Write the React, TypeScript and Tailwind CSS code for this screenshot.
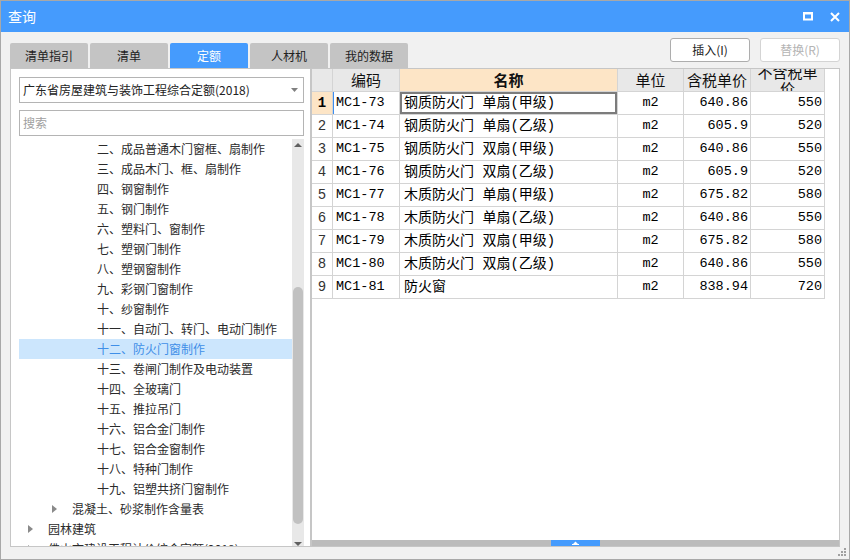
import React from 'react';

type TreeItem = { level: 1 | 2 | 3; text: string; arrow?: boolean; selected?: boolean };

const TREE: TreeItem[] = [
  { level: 3, text: '二、成品普通木门窗框、扇制作' },
  { level: 3, text: '三、成品木门、框、扇制作' },
  { level: 3, text: '四、钢窗制作' },
  { level: 3, text: '五、钢门制作' },
  { level: 3, text: '六、塑料门、窗制作' },
  { level: 3, text: '七、塑钢门制作' },
  { level: 3, text: '八、塑钢窗制作' },
  { level: 3, text: '九、彩钢门窗制作' },
  { level: 3, text: '十、纱窗制作' },
  { level: 3, text: '十一、自动门、转门、电动门制作' },
  { level: 3, text: '十二、防火门窗制作', selected: true },
  { level: 3, text: '十三、卷闸门制作及电动装置' },
  { level: 3, text: '十四、全玻璃门' },
  { level: 3, text: '十五、推拉吊门' },
  { level: 3, text: '十六、铝合金门制作' },
  { level: 3, text: '十七、铝合金窗制作' },
  { level: 3, text: '十八、特种门制作' },
  { level: 3, text: '十九、铝塑共挤门窗制作' },
  { level: 2, text: '混凝土、砂浆制作含量表', arrow: true },
  { level: 1, text: '园林建筑', arrow: true },
  { level: 1, text: '佛山市建设工程计价综合定额(2018)', arrow: true },
];

const ROWS = [
  ['MC1-73', '钢质防火门 单扇(甲级)', 'm2', '640.86', '550'],
  ['MC1-74', '钢质防火门 单扇(乙级)', 'm2', '605.9', '520'],
  ['MC1-75', '钢质防火门 双扇(甲级)', 'm2', '640.86', '550'],
  ['MC1-76', '钢质防火门 双扇(乙级)', 'm2', '605.9', '520'],
  ['MC1-77', '木质防火门 单扇(甲级)', 'm2', '675.82', '580'],
  ['MC1-78', '木质防火门 单扇(乙级)', 'm2', '640.86', '550'],
  ['MC1-79', '木质防火门 双扇(甲级)', 'm2', '675.82', '580'],
  ['MC1-80', '木质防火门 双扇(乙级)', 'm2', '640.86', '550'],
  ['MC1-81', '防火窗', 'm2', '838.94', '720'],
];

const TABS = ['清单指引', '清单', '定额', '人材机', '我的数据'];

const indent = { 1: 'pl-[9px]', 2: 'pl-[33px]', 3: 'pl-[58px]' };

const ui = "font-['Noto_Sans_CJK_SC','Noto_Sans',sans-serif]";
const mono = "font-['Liberation_Mono','Noto_Sans_CJK_SC',monospace]";

function Arrow() {
  return (
    <svg width="5" height="8" viewBox="0 0 5 8">
      <path d="M0 0 L5 4 L0 8 Z" fill="#8a8a8a" />
    </svg>
  );
}

function TreeList() {
  return (
    <div className="flex-1 min-h-0 flex overflow-hidden">
      <div className="flex-1 overflow-hidden">
        {TREE.map((item, i) => (
          <div
            key={i}
            className={`h-[20px] flex items-center whitespace-nowrap text-[12px] ${indent[item.level]} ${
              item.selected ? 'bg-[#cce6fd] text-[#3f8fe8]' : 'text-[#2a2a2a]'
            }`}
          >
            <span className="w-[20px] flex items-center">{item.arrow && <Arrow />}</span>
            <span className="leading-[20px]">{item.text}</span>
          </div>
        ))}
      </div>
      {/* vertical scrollbar */}
      <div className="w-[12px] bg-[#e8e8e8] flex flex-col items-center">
        <svg width="8" height="4" viewBox="0 0 8 4" className="mt-[4px]">
          <path d="M0 4 L4 0 L8 4 Z" fill="#606060" />
        </svg>
        <div className="mt-[140px] w-[10px] h-[237px] rounded-full bg-[#c1c1c1]" />
        <svg width="8" height="4" viewBox="0 0 8 4" className="mt-[18px]">
          <path d="M0 0 L8 0 L4 4 Z" fill="#606060" />
        </svg>
      </div>
    </div>
  );
}

function LeftPanel() {
  return (
    <div className="w-[301px] border border-[#c6c6c6] bg-white pl-[8px] pr-[6px] pt-[8px] flex flex-col">
      <div className="h-[26px] border border-[#b4b4b4] flex items-center pl-[3px] pr-[5px]">
        <span className="flex-1 text-[12px] text-[#222] whitespace-nowrap">广东省房屋建筑与装饰工程综合定额(2018)</span>
        <svg width="7" height="4" viewBox="0 0 7 4">
          <path d="M0 0 L7 0 L3.5 4 Z" fill="#808080" />
        </svg>
      </div>
      <div className="mt-[7px] h-[26px] border border-[#b4b4b4] flex items-center pl-[3px]">
        <span className="text-[12px] text-[#a0a0a0]">搜索</span>
      </div>
      <div className="mt-[3px] flex-1 min-h-0 flex flex-col">
        <TreeList />
      </div>
    </div>
  );
}

const COLS = ['w-[21px]', 'w-[67px]', 'w-[218px]', 'w-[66px]', 'w-[67px]', 'w-[74px]'];
const cell = 'h-[23px] shrink-0 border-r border-b border-[#d4d4d4] overflow-hidden whitespace-nowrap flex items-center';

function Grid() {
  return (
    <div className="flex flex-col w-[513px]">
      <div className="flex bg-[#e8e8e8] text-[15px] text-[#111]">
        <div className={`${cell} ${COLS[0]}`} />
        <div className={`${cell} ${COLS[1]} justify-center`}>编码</div>
        <div className={`${cell} ${COLS[2]} justify-center bg-[#fde5c6] font-bold`}>名称</div>
        <div className={`${cell} ${COLS[3]} justify-center`}>单位</div>
        <div className={`${cell} ${COLS[4]} justify-center`}>含税单价</div>
        <div className={`${cell} ${COLS[5]} justify-center`}>
          <span className="block w-[66px] whitespace-normal text-center leading-[16px]">不含税单价</span>
        </div>
      </div>
      {ROWS.map((r, i) => (
        <div key={i} className={`flex text-[14px] text-black ${mono}`}>
          <div
            className={`${cell} ${COLS[0]} justify-center ${
              i === 0 ? 'bg-[#fde5c6] font-bold' : 'text-[#333]'
            }`}
          >
            {i + 1}
          </div>
          <div className={`${cell} ${COLS[1]} pl-[3px] text-[13.5px] ${i === 0 ? 'shadow-[inset_1px_0_0_#3d8ef0]' : ''}`}>
            {r[0]}
          </div>
          <div className={`${cell} ${COLS[2]} pl-[4px] ${i === 0 ? 'shadow-[inset_0_0_0_2px_#7c7c7c]' : ''}`}>
            {r[1]}
          </div>
          <div className={`${cell} ${COLS[3]} justify-center text-[13.5px]`}>{r[2]}</div>
          <div className={`${cell} ${COLS[4]} justify-end pr-[2px] text-[13.5px]`}>{r[3]}</div>
          <div className={`${cell} ${COLS[5]} justify-end pr-[2px] text-[13.5px]`}>{r[4]}</div>
        </div>
      ))}
    </div>
  );
}

function RightPanel() {
  return (
    <div className="flex-1 border border-[#c6c6c6] bg-white flex flex-col">
      <div className="flex-1 overflow-hidden">
        <Grid />
      </div>
      <div className="h-[6px] bg-[#bcbcbc] flex justify-center">
        <div className="w-[49px] bg-[#459bfd] flex items-center justify-center">
          <svg width="7" height="4" viewBox="0 0 7 4">
            <path d="M1 3 L3.5 0.5 L6 3 Z M0 3 H7 V4 H0 Z" fill="#ffffff" />
          </svg>
        </div>
      </div>
    </div>
  );
}

export default function App() {
  return (
    <div className={`relative w-[850px] h-[560px] border border-[#a8a8a8] bg-[#f1f1f1] flex flex-col ${ui}`}>
      <div className="h-[31px] bg-[#459bfd] flex items-center pl-[7px] pr-[9px] text-white">
        <span className="text-[14px] flex-1">查询</span>
        <svg width="10" height="9" viewBox="0 0 10 9" className="mr-[17px]">
          <rect x="1" y="1.5" width="8" height="6" fill="none" stroke="#fff" strokeWidth="2" />
          <rect x="0" y="0" width="10" height="2" fill="#fff" />
        </svg>
        <svg width="10" height="10" viewBox="0 0 10 10">
          <path d="M1 1 L9 9 M9 1 L1 9" stroke="#fff" strokeWidth="2" />
        </svg>
      </div>

      <div className="h-[36px] flex px-[9px]">
        <div className="flex items-end gap-[2px]">
          {TABS.map((t) => (
            <div
              key={t}
              className={`w-[78px] h-[25px] rounded-t-[2px] flex items-center justify-center text-[12px] ${
                t === '定额' ? 'bg-[#459bfd] text-white' : 'bg-[#c4c4c4] text-[#222]'
              }`}
            >
              {t}
            </div>
          ))}
        </div>
        <div className="flex-1" />
        <div className="flex gap-[10px] pt-[6px]">
          <div className="w-[80px] h-[24px] border border-[#adadad] rounded-[3px] bg-white flex items-center justify-center text-[12px] text-[#222]">
            插入(I)
          </div>
          <div className="w-[80px] h-[24px] border border-[#d4d4d4] rounded-[3px] bg-white flex items-center justify-center text-[12px] text-[#b4b4b4]">
            替换(R)
          </div>
        </div>
      </div>

      <div className="h-[479px] flex px-[9px]">
        <LeftPanel />
        <RightPanel />
      </div>

      {/* resize grip */}
      <div className="absolute right-[3px] bottom-[3px] grid grid-cols-3 gap-[1px]">
        {[0, 0, 1, 0, 1, 1, 1, 1, 1].map((v, i) => (
          <div key={i} className={`w-[2px] h-[2px] ${v ? 'bg-[#a0a0a0]' : ''}`} />
        ))}
      </div>
    </div>
  );
}
